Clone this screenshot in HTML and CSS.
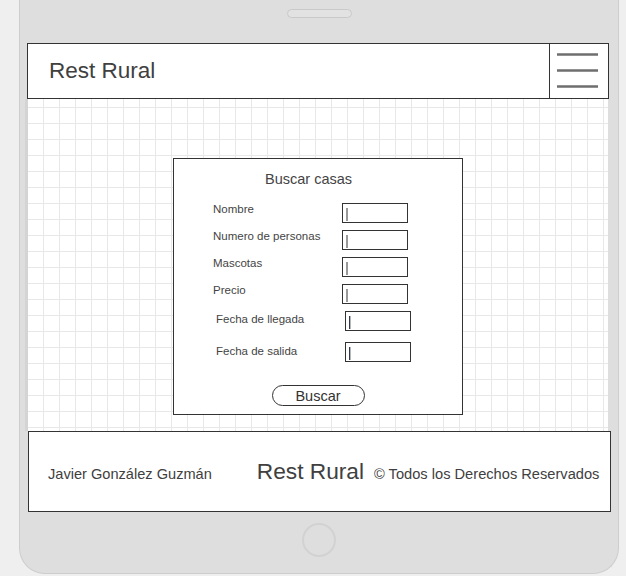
FILE: index.html
```html
<!DOCTYPE html>
<html lang="es">
<head>
<meta charset="utf-8">
<title>Rest Rural</title>
<link rel="stylesheet" href="styles.css">
</head>
<body>
<div class="phone">
  <div class="speaker"></div>
  <header class="topbar">
    <div class="brand">Rest Rural</div>
    <div class="menu">
      <svg width="58" height="54" viewBox="0 0 58 54">
        <g stroke="#6e6e6e" stroke-width="2.4">
          <line x1="7" y1="10.5" x2="48" y2="10.5"/>
          <line x1="7" y1="26.5" x2="48" y2="26.5"/>
          <line x1="7" y1="42.5" x2="48" y2="42.5"/>
        </g>
      </svg>
    </div>
  </header>
  <main class="canvas">
    <form class="search">
      <div class="search-title">Buscar casas</div>
      <div class="rows">
        <div class="row"><span class="label">Nombre</span><span class="field"></span></div>
        <div class="row"><span class="label">Numero de personas</span><span class="field"></span></div>
        <div class="row"><span class="label">Mascotas</span><span class="field"></span></div>
        <div class="row"><span class="label">Precio</span><span class="field"></span></div>
        <div class="row row-shift"><span class="label">Fecha de llegada</span><span class="field field-blue"></span></div>
        <div class="row row-shift row-last"><span class="label">Fecha de salida</span><span class="field field-blue"></span></div>
      </div>
      <div class="actions"><span class="btn">Buscar</span></div>
    </form>
  </main>
  <footer class="foot">
    <span class="author">Javier González Guzmán</span>
    <span class="foot-brand">Rest Rural</span>
    <span class="copy">© Todos los Derechos Reservados</span>
  </footer>
  <div class="home"></div>
</div>
</body>
</html>
```
FILE: styles.css
```css
html, body {
  margin: 0;
  padding: 0;
}
body {
  background: #efefef;
  font-family: "Liberation Sans", Arial, sans-serif;
  color: #333;
  overflow: hidden;
}
.phone {
  margin-left: 19px;
  width: 600px;
  height: 574px;
  box-sizing: border-box;
  border: 1px solid #cdcdcd;
  border-top: none;
  border-radius: 0 0 26px 26px;
  background: #dedede;
  padding-top: 9px;
}
.speaker {
  margin-left: 267px;
  width: 65px;
  height: 9px;
  box-sizing: border-box;
  border: 1px solid #c9c9c9;
  border-radius: 5px;
  background: #e2e2e2;
}
.topbar {
  margin: 25px 0 0 7px;
  width: 582px;
  height: 56px;
  box-sizing: border-box;
  border: 1px solid #333;
  background: #fff;
  display: flex;
}
.brand {
  flex: 1;
  display: flex;
  align-items: center;
  padding-left: 21px;
  font-size: 22.5px;
  color: #404040;
}
.menu {
  width: 58px;
  border-left: 1px solid #333;
  display: flex;
}
.canvas {
  margin-left: 8px;
  width: 580px;
  height: 332px;
  padding-top: 59px;
  box-sizing: border-box;
  background-color: #fff;
  background-image:
    linear-gradient(to right, #e8e8e8 1px, transparent 1px),
    linear-gradient(to bottom, #e8e8e8 1px, transparent 1px);
  background-size: 16px 16px;
  background-position: 15px 8px;
  box-shadow: -3px 0 0 #d4d4d4;
}
.search {
  margin: 0 auto;
  width: 290px;
  height: 257px;
  box-sizing: border-box;
  border: 1px solid #333;
  background: #fff;
  padding: 12px 0 7px;
}
.search-title {
  padding-left: 91px;
  font-size: 14.5px;
  line-height: 17px;
  color: #444;
}
.rows {
  margin-top: 15px;
  display: flex;
  flex-direction: column;
  gap: 7px;
}
.row {
  display: flex;
  align-items: flex-start;
  padding-left: 39px;
}
.row-shift {
  padding-left: 42px;
}
.row-shift .label {
  padding-top: 2px;
}
.row-last {
  margin-top: 4px;
}
.row-last .label {
  padding-top: 3px;
}
.label {
  width: 129px;
  font-size: 11.5px;
  line-height: 13px;
  color: #444;
}
.field {
  width: 66px;
  height: 20px;
  box-sizing: border-box;
  border: 1px solid #333;
  padding: 4px 0 0 3px;
  display: flex;
}
.field::before {
  content: "";
  width: 2px;
  height: 13px;
  background: #999;
}
.field-blue::before {
  width: 1px;
  background: #2f3a55;
  box-shadow: 1px 0 0 #b8b8b8;
}
.actions {
  margin-top: 23px;
  display: flex;
  justify-content: center;
}
.btn {
  width: 93px;
  height: 21px;
  box-sizing: border-box;
  border: 1px solid #333;
  border-radius: 11px;
  display: flex;
  align-items: center;
  justify-content: center;
  font-size: 14.5px;
  color: #333;
}
.foot {
  margin-left: 8px;
  width: 583px;
  height: 81px;
  box-sizing: border-box;
  border: 1px solid #333;
  background: #fff;
  display: flex;
  align-items: baseline;
  padding: 25.5px 0 0 19px;
  white-space: nowrap;
}
.author {
  font-size: 14.6px;
  color: #404040;
  margin-right: 45px;
}
.foot-brand {
  font-size: 22.7px;
  color: #404040;
  margin-right: 10px;
}
.copy {
  font-size: 14.65px;
  color: #404040;
}
.home {
  margin: 11px auto 0;
  width: 34px;
  height: 34px;
  box-sizing: border-box;
  border: 2px solid #d2d2d2;
  border-radius: 50%;
}
```
